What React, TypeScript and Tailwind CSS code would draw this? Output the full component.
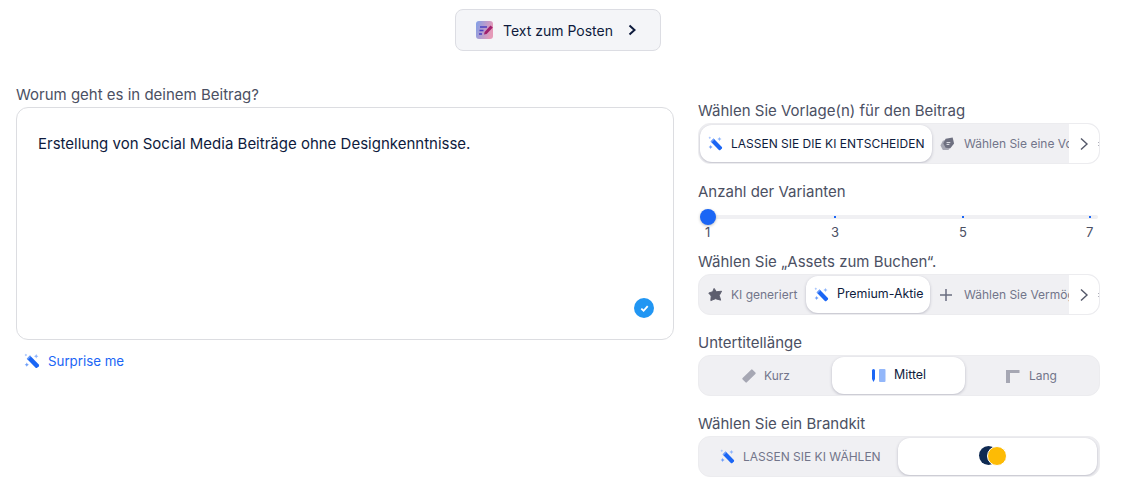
import React from "react";

const font = "font-['Inter','Liberation_Sans',sans-serif]";

function Wand({ className = "" }: { className?: string }) {
  return (
    <svg viewBox="0 0 16 16" className={className}>
      <path d="M2.8 5.8 L6 2.6 L14.8 11.6 Q15.4 12.4 14.8 13.2 L13.2 14.8 Q12.4 15.4 11.6 14.8 Z" fill="#1b66f5" />
      <path d="M2.8 5.8 L6 2.6 L7 3.6 L3.8 6.8 Z" fill="#6f9ff9" />
      <path d="M12.2 1 l.7 1.5 1.5.7 -1.5.7 -.7 1.5 -.7-1.5 -1.5-.7 1.5-.7z" fill="#8fb5fb" />
      <path d="M2.8 9.6 l.7 1.4 1.4.7 -1.4.7 -.7 1.4 -.7-1.4 -1.4-.7 1.4-.7z" fill="#6f9ff9" />
      <rect x="1" y="1" width="1.8" height="1.8" fill="#a9c6fc" transform="rotate(45 1.9 1.9)" />
    </svg>
  );
}

function Chevron() {
  return (
    <div className="absolute right-0 top-0 bottom-0 w-[30px] bg-white rounded-r-xl flex items-center justify-center">
      <svg viewBox="0 0 12 16" className="w-[12px] h-[16px]" fill="none" stroke="#55596a" strokeWidth="1.4">
        <path d="M3 2.5 L9 8 L3 13.5" />
      </svg>
      <span className="absolute right-[0px] top-[18px] w-[1px] h-[1px] bg-[#b0b0bb]" />
      <span className="absolute right-[0px] top-[21px] w-[1px] h-[1px] bg-[#b0b0bb]" />
    </div>
  );
}

function Label({ children, className = "" }: { children: React.ReactNode; className?: string }) {
  return <div className={`text-[15px] leading-[20px] text-[#4b5063] ${className}`}>{children}</div>;
}

function Tabs({ children }: { children: React.ReactNode }) {
  return (
    <div className="relative mt-[2px] h-[41px] w-full rounded-xl bg-[#f0f0f3] border border-[#ececef] overflow-hidden flex items-center px-[1px] whitespace-nowrap">
      {children}
    </div>
  );
}

const activePill = "h-[37px] bg-white rounded-xl shadow-[0_1px_3px_rgba(60,60,90,0.3)] flex items-center";
const muted = "text-[#72758a] text-[12px]";

export default function App() {
  return (
    <div className={`w-[1124px] h-[498px] bg-white overflow-hidden ${font}`}>
      <div className="flex justify-center pt-[9px] pr-[8px]">
        <div className="w-[206px] h-[42px] rounded-lg border border-[#dcdde3] bg-[#f4f5f8] flex items-center pl-[20px]">
          <svg viewBox="0 0 18 18" className="w-[18px] h-[18px]">
            <defs>
              <linearGradient id="g" x1="0" y1="0" x2="1" y2="0.3">
                <stop offset="0" stopColor="#7f9fe8" />
                <stop offset="1" stopColor="#e59ab8" />
              </linearGradient>
            </defs>
            <rect x="0" y="0" width="17" height="18" rx="3" fill="url(#g)" />
            <path d="M4 6h7M3.5 9.5h4M3 13h3" stroke="#4a3fc0" strokeWidth="1.4" fill="none" />
            <path d="M8 13.5 L8.6 11 L14.5 4.5 L16.8 6.5 L10.6 13 Z" fill="#a01f6d" />
          </svg>
          <span className="ml-[9px] text-[14px] text-[#0e1b3d]">Text zum Posten</span>
          <svg viewBox="0 0 10 14" className="ml-[14px] w-[10px] h-[14px]" fill="none" stroke="#0e1b3d" strokeWidth="2">
            <path d="M2.5 2.5 L7.5 7 L2.5 11.5" />
          </svg>
        </div>
      </div>

      <div className="flex pl-[16px] mt-[34px]">
        <div className="w-[658px]">
          <Label>Worum geht es in deinem Beitrag?</Label>
          <div className="relative mt-[2px] h-[233px] rounded-xl border border-[#dcdde1] pt-[26px] pl-[21px]">
            <div className="text-[15px] leading-[20px] text-[#0e1b3d]">
              Erstellung von Social Media Beiträge ohne Designkenntnisse.
            </div>
            <div className="absolute right-[19px] bottom-[21px] w-[20px] h-[20px] rounded-full bg-[#2196f3] flex items-center justify-center">
              <svg viewBox="0 0 12 12" className="w-[11px] h-[11px]" fill="none" stroke="white" strokeWidth="2">
                <path d="M2.5 6.2 L5 8.5 L9.5 3.5" />
              </svg>
            </div>
          </div>
          <div className="flex items-center mt-[12px] pl-[8px]">
            <Wand className="w-[16px] h-[16px]" />
            <span className="ml-[8px] text-[13.3px] leading-[18px] text-[#1b66f5]">Surprise me</span>
          </div>
        </div>

        <div className="ml-[24px] w-[402px] pt-[16px]">
          <Label>Wählen Sie Vorlage(n) für den Beitrag</Label>
          <Tabs>
            <div className={`${activePill} w-[232px] pl-[8px] shrink-0`}>
              <Wand className="w-[15px] h-[15px]" />
              <span className="ml-[8px] text-[12px] text-[#0e1b3d]">LASSEN SIE DIE KI ENTSCHEIDEN</span>
            </div>
            <svg viewBox="0 0 16 16" className="ml-[8px] w-[15px] h-[15px] shrink-0">
              <path d="M3 5 L11 3 L13 9 L9 15 L3 15 L0.5 10 Z" fill="#a6a7b3" />
              <path d="M6 3 L13.5 1.5 L15 8 L11 13 L6 12.5 L3.5 8 Z" fill="#6e7080" />
              <path d="M7 7h4M7 9h3" stroke="#e8e8ee" strokeWidth="1" />
            </svg>
            <span className={`ml-[9px] ${muted}`}>Wählen Sie eine Vorlage</span>
            <Chevron />
          </Tabs>

          <Label className="mt-[18px]">Anzahl der Varianten</Label>
          <div className="relative mt-[13px] h-[4px] ml-[2px] mr-[2px] bg-[#f0f0f3] rounded-full">
            <span className="absolute left-[134px] top-[1px] w-[2px] h-[2px] bg-[#1b66f5]" />
            <span className="absolute left-[262px] top-[1px] w-[2px] h-[2px] bg-[#1b66f5]" />
            <span className="absolute left-[389px] top-[1px] w-[2px] h-[2px] bg-[#1b66f5]" />
            <span className="absolute left-[0px] top-[-6px] w-[16px] h-[16px] rounded-full bg-[#1b66f5] shadow-[0_1px_3px_rgba(0,0,0,0.25)]" />
          </div>
          <div className="relative mt-[4px] h-[18px] text-[13px] leading-[18px] text-[#4b5063]">
            <span className="absolute left-[7px]">1</span>
            <span className="absolute left-[133px]">3</span>
            <span className="absolute left-[261px]">5</span>
            <span className="absolute left-[388px]">7</span>
          </div>

          <Label className="mt-[11px]">Wählen Sie „Assets zum Buchen“.</Label>
          <Tabs>
            <svg viewBox="0 0 16 16" className="ml-[8px] w-[15px] h-[15px] shrink-0">
              <path d="M6.5 1.5 L9 5 L14.5 4.5 L12 9 L13.5 14 L8 12.5 L3 14.5 L3.4 9.6 L0.8 6.4 L5 5 Z" fill="#5d5e6e" stroke="#5d5e6e" strokeWidth="1" strokeLinejoin="round" />
            </svg>
            <span className={`ml-[8px] ${muted} w-[75px] shrink-0`}>KI generiert</span>
            <div className={`${activePill} w-[124px] pl-[8px] shrink-0`}>
              <Wand className="w-[15px] h-[15px]" />
              <span className="ml-[8px] text-[12.4px] text-[#0e1b3d]">Premium-Aktie</span>
            </div>
            <svg viewBox="0 0 14 14" className="ml-[9px] w-[14px] h-[14px] shrink-0" stroke="#6a6d80" strokeWidth="1.5">
              <path d="M7 1v12M1 7h12" />
            </svg>
            <span className={`ml-[11px] ${muted}`}>Wählen Sie Vermögenswerte</span>
            <Chevron />
          </Tabs>

          <Label className="mt-[18px]">Untertitellänge</Label>
          <Tabs>
            <div className="w-[132px] shrink-0 flex items-center justify-center gap-[8px]">
              <svg viewBox="0 0 14 14" className="w-[14px] h-[14px]">
                <rect x="0" y="4" width="14" height="6" rx="1" fill="#a6a7b3" transform="rotate(-45 7 7)" />
              </svg>
              <span className={muted}>Kurz</span>
            </div>
            <div className={`${activePill} w-[133px] justify-center gap-[8px] shrink-0`}>
              <svg viewBox="0 0 15 15" className="w-[15px] h-[15px]">
                <path d="M1 2.5 Q1 1 2.5 1 Q4 1 4 2.5 V11 L2.5 14 L1 11 Z" fill="#1b66f5" />
                <rect x="8" y="1" width="6.5" height="13" rx="1" fill="#93b7fa" />
              </svg>
              <span className="text-[12.4px] text-[#0e1b3d]">Mittel</span>
            </div>
            <div className="flex-1 flex items-center justify-center gap-[9px]">
              <svg viewBox="0 0 14 14" className="w-[14px] h-[14px]">
                <path d="M0 1 H13.5 V4 H4 V14 H0 Z" fill="#a6a7b3" />
              </svg>
              <span className={muted}>Lang</span>
            </div>
          </Tabs>

          <Label className="mt-[18px]">Wählen Sie ein Brandkit</Label>
          <Tabs>
            <div className="w-[198px] shrink-0 flex items-center pl-[20px]">
              <Wand className="w-[15px] h-[15px]" />
              <span className={`ml-[8px] ${muted}`}>LASSEN SIE KI WÄHLEN</span>
            </div>
            <div className={`${activePill} flex-1 justify-center mr-[1px] pr-[9px] pb-[2px]`}>
              <div className="flex items-center">
                <span className="w-[19px] h-[19px] rounded-full bg-[#0f2a52]" />
                <span className="w-[20px] h-[20px] -ml-[11px] rounded-full bg-[#fdbb05] border border-white" />
              </div>
            </div>
          </Tabs>
        </div>
      </div>
    </div>
  );
}
